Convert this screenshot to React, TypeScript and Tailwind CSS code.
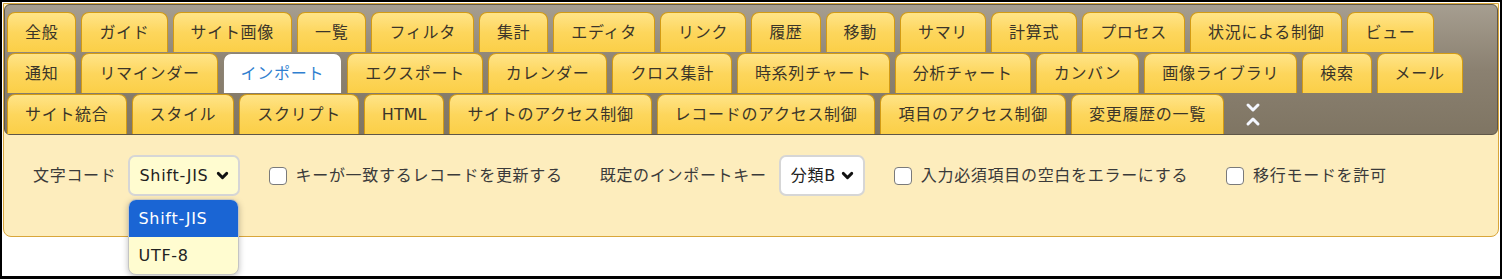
import { ChevronDown } from "lucide-react";

type Tab = { label: string; active?: boolean; latin?: boolean };

const ROWS: Tab[][] = [
  [
    { label: "全般" },
    { label: "ガイド" },
    { label: "サイト画像" },
    { label: "一覧" },
    { label: "フィルタ" },
    { label: "集計" },
    { label: "エディタ" },
    { label: "リンク" },
    { label: "履歴" },
    { label: "移動" },
    { label: "サマリ" },
    { label: "計算式" },
    { label: "プロセス" },
    { label: "状況による制御" },
    { label: "ビュー" },
  ],
  [
    { label: "通知" },
    { label: "リマインダー" },
    { label: "インポート", active: true },
    { label: "エクスポート" },
    { label: "カレンダー" },
    { label: "クロス集計" },
    { label: "時系列チャート" },
    { label: "分析チャート" },
    { label: "カンバン" },
    { label: "画像ライブラリ" },
    { label: "検索" },
    { label: "メール" },
  ],
  [
    { label: "サイト統合" },
    { label: "スタイル" },
    { label: "スクリプト" },
    { label: "HTML", latin: true },
    { label: "サイトのアクセス制御" },
    { label: "レコードのアクセス制御" },
    { label: "項目のアクセス制御" },
    { label: "変更履歴の一覧" },
  ],
];

function TabItem({ tab }: { tab: Tab }) {
  const base = "flex h-[40px] items-center rounded-t-[8px] border border-b-0 px-[17px] text-[16px] whitespace-nowrap";
  const look = tab.active
    ? "border-[#8d8474] bg-white text-[#2f7fd0]"
    : "border-[#d39b14] bg-gradient-to-b from-[#ffe487] via-[#fdd65c] to-[#fbcf47] text-[#3b3529]";
  return <div className={`${base} ${look} ${tab.latin ? "tracking-normal" : "tracking-[0.7px]"}`}>{tab.label}</div>;
}

function CollapseIcon() {
  return (
    <svg width="16" height="26" viewBox="0 0 16 26" className="ml-[16px]">
      <path d="M3 4 L8 9 L13 4" fill="none" stroke="#f4f7ff" strokeWidth="3" strokeLinecap="round" strokeLinejoin="round" />
      <path d="M3 23 L8 18 L13 23" fill="none" stroke="#f4f7ff" strokeWidth="3" strokeLinecap="round" strokeLinejoin="round" />
    </svg>
  );
}

function Check({ label, className }: { label: string; className?: string }) {
  return (
    <label className={`flex items-center ${className ?? ""}`}>
      <span className="h-[18px] w-[18px] rounded-[4px] border-[1.5px] border-[#7a7a7a] bg-white" />
      <span className="ml-[9px] whitespace-nowrap">{label}</span>
    </label>
  );
}

function FakeSelect({ value, width, bg, children }: { value: string; width: string; bg: string; children?: React.ReactNode }) {
  return (
    <div className={`relative ${width}`}>
      <div className={`flex h-[41px] items-center justify-between rounded-[7px] border-2 border-[#d6d6d6] pl-[10px] pr-[7px] text-[#222] ${bg}`}>
        <span className="whitespace-nowrap">{value}</span>
        <ChevronDown size={17} strokeWidth={4} color="#111" />
      </div>
      {children}
    </div>
  );
}

export default function App() {
  return (
    <div
      className="h-[279px] w-[1502px] overflow-hidden border-2 border-b-[3px] border-black bg-white text-[16px] tracking-[0.7px] text-[#3a3a3a]"
      style={{ fontFamily: '"DejaVu Sans", "Noto Sans CJK JP", sans-serif' }}
    >
      <div className="mx-[1px] mt-[1px] h-[234px] rounded-b-[8px] border border-[#d9a63a] bg-[#fdedbd]">
        <div className="rounded-[6px] border border-[#5f5748] bg-gradient-to-b from-[#a69e90] via-[#8b8171] to-[#7f7563] pl-[2px] pt-[7px]">
          <div className="flex flex-col gap-[1px]">
            {ROWS.map((row, i) => (
              <div key={i} className="flex items-center gap-[5px]">
                {row.map((tab) => (
                  <TabItem key={tab.label} tab={tab} />
                ))}
                {i === 2 ? <CollapseIcon /> : null}
              </div>
            ))}
          </div>
        </div>
        <div className="flex items-center pl-[29px] pt-[20px]">
          <span className="whitespace-nowrap">文字コード</span>
          <div className="ml-[11px]">
            <FakeSelect value="Shift-JIS" width="w-[112px]" bg="bg-[#fffcd0]">
              <div className="absolute left-0 top-[44px] w-[111px] overflow-hidden rounded-[8px] border border-[#c4c4c4] bg-[#fffcd0] shadow-[0_2px_6px_rgba(0,0,0,0.25)]">
                <div className="flex h-[37px] items-center bg-[#1a65d4] pl-[10px] text-white">Shift-JIS</div>
                <div className="flex h-[37px] items-center pl-[10px] text-[#222]">UTF-8</div>
              </div>
            </FakeSelect>
          </div>
          <Check label="キーが一致するレコードを更新する" className="ml-[29px]" />
          <span className="ml-[37px] whitespace-nowrap">既定のインポートキー</span>
          <div className="ml-[12px]">
            <FakeSelect value="分類B" width="w-[86px]" bg="bg-white" />
          </div>
          <Check label="入力必須項目の空白をエラーにする" className="ml-[29px]" />
          <Check label="移行モードを許可" className="ml-[38px]" />
        </div>
      </div>
    </div>
  );
}
